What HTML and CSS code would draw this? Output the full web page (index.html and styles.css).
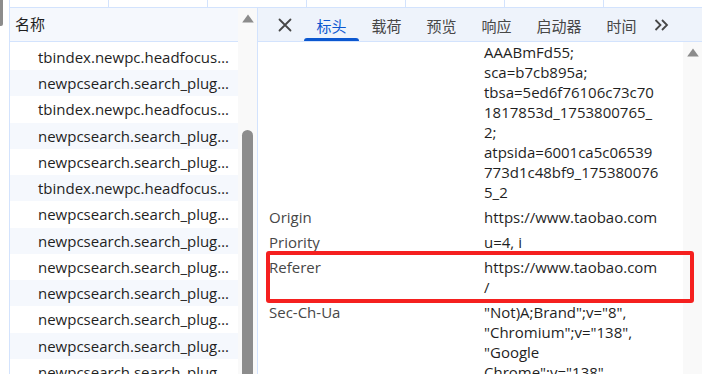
FILE: index.html
```html
<!DOCTYPE html>
<html lang="zh-CN">
<head>
<meta charset="utf-8">
<title>Network</title>
<link rel="stylesheet" href="styles.css">
</head>
<body>
<div class="app">
  <div class="gutter"><div class="gutter-thumb"></div></div>
  <div class="main">
    <div class="strip">
      <div class="cell"></div><div class="cell"></div><div class="cell"></div><div class="cell"></div><div class="cell"></div><div class="cell"></div><div class="cell"></div>
    </div>
    <div class="panels">
      <div class="list-panel">
        <div class="grid">
          <div class="grid-head">名称</div>
          <div class="grid-body">
            <div class="row">tbindex.newpc.headfocus…</div>
            <div class="row">newpcsearch.search_plug…</div>
            <div class="row">tbindex.newpc.headfocus…</div>
            <div class="row">newpcsearch.search_plug…</div>
            <div class="row">newpcsearch.search_plug…</div>
            <div class="row">tbindex.newpc.headfocus…</div>
            <div class="row">newpcsearch.search_plug…</div>
            <div class="row">newpcsearch.search_plug…</div>
            <div class="row">newpcsearch.search_plug…</div>
            <div class="row">newpcsearch.search_plug…</div>
            <div class="row">newpcsearch.search_plug…</div>
            <div class="row">newpcsearch.search_plug…</div>
            <div class="row">newpcsearch.search_plug…</div>
          </div>
        </div>
        <div class="vscroll">
          <svg class="arrow" width="12" height="9" viewBox="0 0 12 9"><polygon points="6,0.5 11.8,8.5 0.2,8.5" fill="#8c8c8c"/></svg>
          <div class="thumb"></div>
        </div>
      </div>
      <div class="detail">
        <div class="tabbar">
          <div class="close">
            <svg width="14" height="14" viewBox="0 0 14 14"><path d="M1.5 1.5 L12.5 12.5 M12.5 1.5 L1.5 12.5" stroke="#474747" stroke-width="1.8" stroke-linecap="round" fill="none"/></svg>
          </div>
          <div class="tab active"><span class="tab-label">标头</span></div>
          <div class="tab"><span class="tab-label">载荷</span></div>
          <div class="tab"><span class="tab-label">预览</span></div>
          <div class="tab"><span class="tab-label">响应</span></div>
          <div class="tab"><span class="tab-label">启动器</span></div>
          <div class="tab"><span class="tab-label">时间</span></div>
          <div class="more">
            <svg width="15" height="12" viewBox="0 0 15 12"><path d="M1.5 1 L6.5 6 L1.5 11 M8 1 L13 6 L8 11" stroke="#474747" stroke-width="1.8" fill="none"/></svg>
          </div>
        </div>
        <div class="detail-body">
          <div class="headers">
            <div class="hrow">
              <div class="hkey"></div>
              <div class="hval"><span>AAABmFd55;</span><span>sca=b7cb895a;</span><span>tbsa=5ed6f76106c73c70</span><span>1817853d_1753800765_</span><span>2;</span><span>atpsida=6001ca5c06539</span><span>773d1c48bf9_175380076</span><span>5_2</span></div>
            </div>
            <div class="hrow">
              <div class="hkey">Origin</div>
              <div class="hval"><span>https://www.taobao.com</span></div>
            </div>
            <div class="hrow">
              <div class="hkey">Priority</div>
              <div class="hval"><span>u=4, i</span></div>
            </div>
            <div class="hrow">
              <div class="hkey">Referer</div>
              <div class="hval"><span>https://www.taobao.com</span><span>/</span></div>
            </div>
            <div class="hrow">
              <div class="hkey">Sec-Ch-Ua</div>
              <div class="hval"><span>"Not)A;Brand";v="8",</span><span>"Chromium";v="138",</span><span>"Google</span><span>Chrome";v="138"</span></div>
            </div>
          </div>
          <div class="vscroll">
            <svg class="arrow" width="12" height="9" viewBox="0 0 12 9"><polygon points="6,0.5 11.8,8.5 0.2,8.5" fill="#8c8c8c"/></svg>
          </div>
          <div class="highlight"></div>
        </div>
      </div>
    </div>
  </div>
</div>
</body>
</html>
```

FILE: styles.css
```css
html, body {
  margin: 0;
  padding: 0;
}

body {
  width: 702px;
  height: 374px;
  overflow: hidden;
  background: #ffffff;
  color: #1f1f1f;
  font-family: "Open Sans", "Noto Sans CJK SC", sans-serif;
  font-size: 15px;
}

.app {
  display: flex;
  height: 374px;
}

.gutter {
  width: 9px;
  flex: none;
}

.gutter-thumb {
  width: 3px;
  height: 26px;
  background: #8c8c8c;
  border-radius: 0 0 2px 0;
}

.main {
  flex: 1;
  min-width: 0;
  display: flex;
  flex-direction: column;
  border-left: 1px solid #d3e3fd;
}

.strip {
  flex: none;
  height: 7px;
  display: flex;
  border-bottom: 1px solid #d3e3fd;
}

.cell {
  flex: none;
  width: 99px;
  box-sizing: border-box;
  border-right: 1px solid #d3e3fd;
}

.panels {
  flex: 1;
  min-height: 0;
  display: flex;
}

.list-panel {
  flex: none;
  width: 248px;
  box-sizing: border-box;
  border-right: 1px solid #d3e3fd;
  display: flex;
  overflow: hidden;
}

.grid {
  flex: 1;
  min-width: 0;
}

.grid-head {
  height: 33px;
  box-sizing: border-box;
  border-bottom: 1px solid #d3e3fd;
  background: #f5f8fd;
  display: flex;
  align-items: center;
  padding: 0 0 2px 5px;
  font-family: "Noto Sans CJK SC", sans-serif;
  color: #1f1f1f;
  height: 34px;
}

.grid-body {
  padding-top: 1.75px;
}

.row {
  height: 26.25px;
  line-height: 26.25px;
  padding: 0 7px 0 28px;
  white-space: nowrap;
  overflow: hidden;
  text-overflow: ellipsis;
}

.row:nth-child(even) {
  background: #f5f8fd;
}

.vscroll {
  flex: none;
  width: 19px;
  background: #f9f9f9;
  display: flex;
  flex-direction: column;
  align-items: center;
}

.arrow {
  margin-top: 6px;
  flex: none;
}

.thumb {
  flex: none;
  width: 11px;
  height: 300px;
  margin-top: 107px;
  background: #8c8c8c;
  border-radius: 6px 6px 0 0;
}

.detail {
  flex: 1;
  min-width: 0;
  display: flex;
  flex-direction: column;
}

.tabbar {
  flex: none;
  height: 34px;
  box-sizing: border-box;
  border-bottom: 1px solid #d3e3fd;
  background: #eef3fb;
  display: flex;
  font-family: "Noto Sans CJK SC", sans-serif;
}

.close {
  width: 28px;
  margin-left: 13px;
  margin-right: 5px;
  display: flex;
  align-items: center;
  justify-content: center;
}

.tab {
  display: flex;
  flex-direction: column;
  padding: 4px 12.5px 0;
  color: #474747;
}

.tab-label {
  flex: 1;
  display: flex;
  align-items: center;
  white-space: nowrap;
}

.tab::after {
  content: "";
  height: 3px;
  margin: 0 -12.5px;
  border-radius: 3px 3px 0 0;
  background: transparent;
}

.tab.active {
  color: #0b57d0;
}

.tab.active::after {
  background: #0b57d0;
}

.more {
  display: flex;
  align-items: center;
  margin-left: 5px;
}

.detail-body {
  flex: 1;
  min-height: 0;
  display: flex;
  position: relative;
}

.headers {
  flex: 1;
  min-width: 0;
  overflow: hidden;
  padding-left: 11px;
}

.hrow {
  display: flex;
  padding-bottom: 5px;
  line-height: 20px;
}

.hkey {
  flex: none;
  width: 215px;
  color: #474747;
}

.hval {
  flex: 1;
  white-space: nowrap;
  color: #1f1f1f;
}

.hval span {
  display: block;
}

.highlight {
  position: absolute;
  left: 8px;
  top: 209px;
  width: 428px;
  height: 52px;
  box-sizing: border-box;
  border: 4px solid #f5201f;
  border-radius: 3px;
}
```
